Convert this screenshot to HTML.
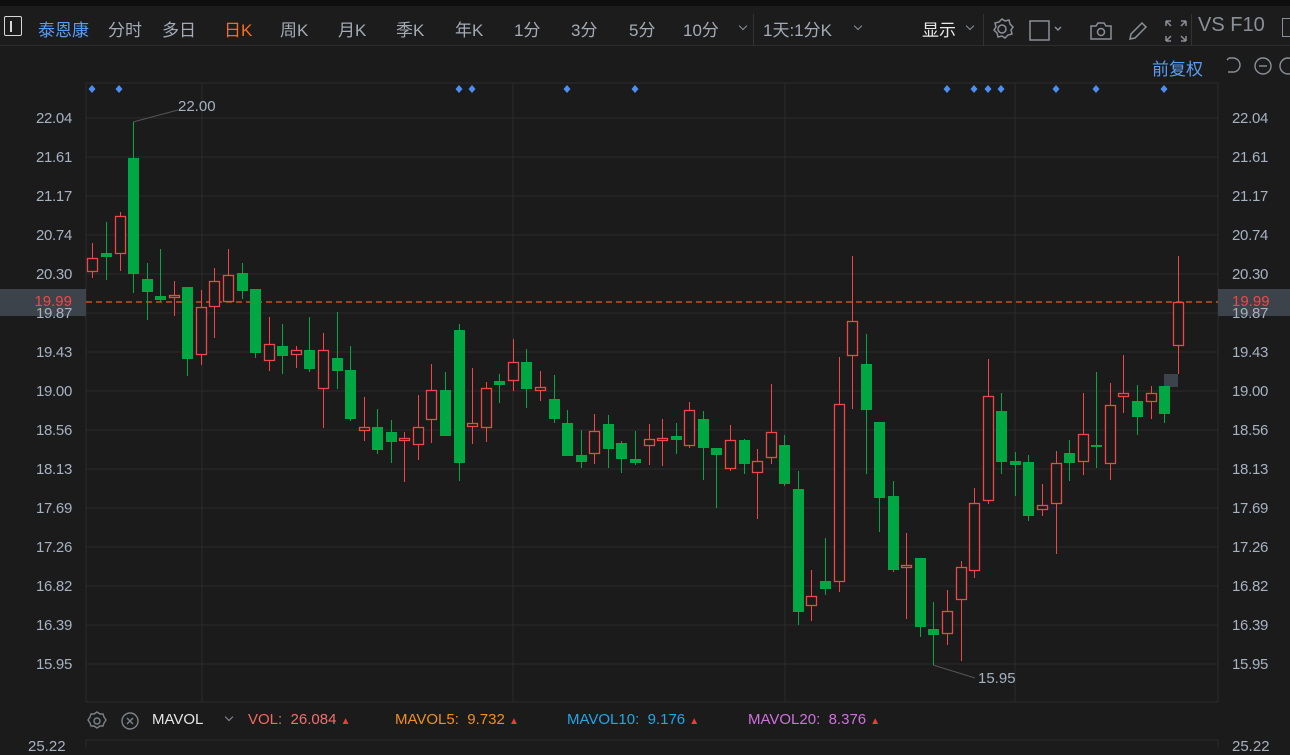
<!DOCTYPE html>
<html><head><meta charset="utf-8">
<style>
*{margin:0;padding:0;box-sizing:border-box}
body{width:1290px;height:747px;overflow:hidden;background:#1b1b1b;font-family:"Liberation Sans","Noto Sans CJK SC",sans-serif;position:relative}
.t{position:absolute;white-space:nowrap}
.top{position:absolute;left:0;top:0;width:1290px;height:6px;background:#0e0e0e}
.bar{position:absolute;left:0;top:6px;width:1290px;height:40px;background:#1c1c1c;border-bottom:1px solid #2c2c2c}
.bar .t{top:10px;font-size:17px;color:#a3abb6}
.div{position:absolute;top:8px;width:1px;height:32px;background:#333}
.chev{position:absolute;top:17px;width:6px;height:6px;border-right:1.3px solid #8a9098;border-bottom:1.3px solid #8a9098;transform:rotate(45deg)}
.ax{position:absolute;font-size:15px;color:#a6b2c2;width:60px;text-align:right;letter-spacing:-0.3px}
.axr{position:absolute;font-size:15px;color:#a6b2c2;left:1232px;letter-spacing:-0.3px}
.bot .t{top:711px;font-size:15px}
</style></head><body>
<div class="top"></div>
<div class="bar">
<div class="t" style="left:4px;top:10px;width:18px;height:20px;border:1.5px solid #d8d8d8;border-radius:2px"></div>
<div class="t" style="left:10px;top:15px;width:2px;height:11px;background:#d8d8d8"></div>
<div class="t" style="left:38px;color:#5b9cf2">泰恩康</div>
<div class="t" style="left:108px">分时</div>
<div class="t" style="left:162px">多日</div>
<div class="t" style="left:224px;color:#ff6a1a">日K</div>
<div class="t" style="left:280px">周K</div>
<div class="t" style="left:338px">月K</div>
<div class="t" style="left:396px">季K</div>
<div class="t" style="left:455px">年K</div>
<div class="t" style="left:514px">1分</div>
<div class="t" style="left:571px">3分</div>
<div class="t" style="left:629px">5分</div>
<div class="t" style="left:683px">10分</div>
<div class="chev" style="left:740px"></div>
<div class="div" style="left:753px"></div>
<div class="t" style="left:763px">1天:1分K</div>
<div class="chev" style="left:855px"></div>
<div class="t" style="left:922px;color:#e8e8e8">显示</div>
<div class="chev" style="left:967px"></div>
<div class="div" style="left:983px"></div>
<svg class="t" style="left:990px;top:8px" width="300" height="30" fill="none" stroke="#8a9098" stroke-width="1.5">
<circle cx="12" cy="15" r="4"/><path d="M12 5l3 2 4-1 1 4 3 3-2 3 1 4-4 1-3 3-3-2-4 1-1-4-3-3 2-3-1-4 4-1z"/>
<rect x="40" y="7" width="19" height="19"/><path d="M65 13l3 3 3-3" />
<path d="M101 12h5l2-3h6l2 3h5v13h-20z"/><circle cx="111" cy="18" r="3.5"/>
<path d="M140 25l1-5 11-11 4 4-11 11z"/>
<path d="M176 7v5M176 7h5M176 7l5 5M196 7v5M196 7h-5M196 7l-5 5M176 27v-5M176 27h5M176 27l5-5M196 27v-5M196 27h-5M196 27l-5-5"/>
</svg>
<div class="div" style="left:1191px"></div>
<div class="t" style="left:1198px;font-size:20px;top:8px;color:#8a9098">VS F10</div>
<div class="t" style="left:1282px;top:12px;width:12px;height:19px;border:1.5px solid #8a9098"></div>
</div>
<div class="t" style="left:1152px;top:55px;font-size:17px;color:#5b9cf2">前复权</div>
<svg class="t" style="left:1222px;top:54px" width="68" height="24" fill="none" stroke="#8a9098" stroke-width="1.4">
<path d="M7 4h4a7 7 0 0 1 0 14h-5M7 4l-2 2"/><circle cx="41" cy="12" r="8"/><path d="M37 12h8"/><circle cx="66" cy="12" r="8"/>
</svg>
<svg id="ch" class="t" style="left:0;top:0" width="1290" height="747"></svg>
<div class="t" style="left:0;top:289px;width:86px;height:27px;background:#3d434a"></div>
<div class="t" style="left:1218px;top:289px;width:72px;height:27px;background:#3d434a"></div>
<div id="axes"></div>
<div class="t" style="left:12px;top:293px;width:60px;text-align:right;font-size:15px;color:#f04848">19.99</div>
<div class="t" style="left:1232px;top:293px;font-size:15px;color:#f04848">19.99</div>
<div class="t" style="left:178px;top:98px;font-size:15px;color:#a6b2c2">22.00</div>
<div class="t" style="left:978px;top:670px;font-size:15px;color:#a6b2c2">15.95</div>
<div class="bot">
<svg class="t" style="left:86px;top:710px" width="60" height="22" fill="none" stroke="#7c828a" stroke-width="1.4">
<circle cx="11" cy="11" r="3"/><path d="M11 2l3 2 3 0 1 3 2 3-2 3-1 3-3 0-3 2-3-2-3 0-1-3-2-3 2-3 1-3 3 0z"/>
<circle cx="44" cy="11" r="8"/><path d="M41 8l6 6M47 8l-6 6"/></svg>
<div class="t" style="left:152px;color:#e6e6e6">MAVOL</div>
<div class="chev" style="left:226px;top:714px"></div>
<div class="t" style="left:248px;color:#f06a60">VOL:&nbsp; <span style="color:#f07070">26.084</span> <span style="color:#f03a3a;font-size:10px">▲</span></div>
<div class="t" style="left:395px;color:#f0901e">MAVOL5:&nbsp; 9.732 <span style="color:#f03a3a;font-size:10px">▲</span></div>
<div class="t" style="left:567px;color:#1ea8e8">MAVOL10:&nbsp; 9.176 <span style="color:#f03a3a;font-size:10px">▲</span></div>
<div class="t" style="left:748px;color:#d070e0">MAVOL20:&nbsp; 8.376 <span style="color:#f03a3a;font-size:10px">▲</span></div>
<div class="t" style="left:28px;top:738px;color:#a6b2c2">25.22</div>
<div class="t" style="left:1232px;top:738px;color:#a6b2c2">25.22</div>
</div>
<script>
var s='';
var G='#2b2b2b';
s+='<rect x="86" y="83" width="1132" height="619" fill="none" stroke="'+G+'"/>';
s+='<line x1="86" y1="740" x2="1218" y2="740" stroke="'+G+'"/>';
s+='<line x1="86" y1="740" x2="86" y2="747" stroke="'+G+'"/><line x1="1218" y1="740" x2="1218" y2="747" stroke="'+G+'"/>';
var labs=['22.04','21.61','21.17','20.74','20.30','19.87','19.43','19.00','18.56','18.13','17.69','17.26','16.82','16.39','15.95'];
var ax='';
for(var i=0;i<15;i++){var y=118+i*39;s+='<line x1="86" y1="'+y+'" x2="1218" y2="'+y+'" stroke="'+G+'"/>';
ax+='<div class="ax" style="left:12px;top:'+(y-8)+'px">'+labs[i]+'</div><div class="axr" style="top:'+(y-8)+'px">'+labs[i]+'</div>';}
document.getElementById('axes').innerHTML=ax;
[202,513,785,1015].forEach(function(x){s+='<line x1="'+x+'" y1="83" x2="'+x+'" y2="702" stroke="'+G+'"/>';});
s+='<line x1="86" y1="302" x2="1218" y2="302" stroke="#e0601a" stroke-width="1.3" stroke-dasharray="6,4"/>';
s+='<polyline points="133,122 178,110" stroke="#555" fill="none"/><polyline points="933,665 975,678" stroke="#555" fill="none"/>';
[92,119,459,472,567,635,947,974,988,1001,1056,1096,1164].forEach(function(x){s+='<path d="M'+x+' 85l3.5 4-3.5 4-3.5-4z" fill="#4d8ff0"/>';});
var c=[
[92,243,278,258,272,'r'],[106,222,280,253,257,'g'],[120,212,271,216,254,'r'],[133,122,293,158,274,'g'],[147,263,320,279,292,'g'],
[160,249,302,296,300,'g'],[174,281,316,295,298,'r'],[187,287,376,287,359,'g'],[201,290,365,307,355,'r'],[214,268,338,281,307,'r'],
[228,249,302,275,302,'r'],[242,263,299,273,291,'g'],[255,289,358,289,353,'g'],[269,317,371,344,361,'r'],[282,324,374,346,356,'g'],
[296,346,368,350,355,'r'],[309,317,372,350,369,'g'],[323,333,428,350,389,'r'],[337,312,389,358,371,'g'],[350,346,421,370,419,'g'],
[364,397,441,427,431,'r'],[377,409,454,427,450,'g'],[391,420,463,432,442,'g'],[404,432,482,438,441,'r'],[418,395,460,427,445,'r'],
[431,364,443,390,420,'r'],[445,372,436,390,436,'g'],[459,324,481,330,463,'g'],[472,368,444,423,427,'r'],[486,382,442,388,428,'r'],
[499,374,403,381,385,'g'],[513,339,391,362,381,'r'],[526,349,408,362,389,'g'],[540,371,401,387,391,'r'],[554,375,423,399,419,'g'],
[567,410,456,423,456,'g'],[581,430,468,455,462,'g'],[594,414,464,431,454,'r'],[608,415,468,424,449,'g'],[621,441,473,443,459,'g'],
[635,431,465,459,463,'g'],[649,424,465,439,446,'r'],[662,419,466,438,441,'r'],[676,423,454,436,440,'g'],[689,402,448,410,446,'r'],
[703,411,480,419,448,'g'],[716,448,508,448,455,'g'],[730,425,471,440,469,'r'],[744,439,474,440,464,'g'],[757,449,519,461,473,'r'],
[771,384,464,432,458,'r'],[784,435,486,445,484,'g'],[798,471,625,489,612,'g'],[811,570,621,596,606,'r'],[825,538,595,581,589,'g'],
[839,357,592,404,582,'r'],[852,256,409,321,356,'r'],[866,334,474,364,410,'g'],[879,422,532,422,498,'g'],[893,481,572,496,570,'g'],
[906,533,619,565,568,'r'],[920,558,637,558,627,'g'],[933,602,665,629,635,'g'],[947,590,645,611,634,'r'],[961,561,661,567,600,'r'],
[974,488,578,503,571,'r'],[988,359,504,396,501,'r'],[1001,393,474,411,462,'g'],[1015,452,496,461,465,'g'],[1028,455,521,462,516,'g'],
[1042,484,516,505,510,'r'],[1056,451,554,463,504,'r'],[1069,440,481,453,463,'g'],[1083,393,475,434,462,'r'],[1096,372,468,445,446,'g'],
[1110,383,480,405,464,'r'],[1123,355,413,393,397,'r'],[1137,385,435,401,417,'g'],[1151,386,419,393,402,'r'],[1164,386,423,386,414,'g'],
[1178,256,374,302,346,'r']];
s+='<rect x="1164" y="374" width="14" height="13" fill="#3d434a"/>';
c.forEach(function(k){var x=k[0]+0.5;
if(k[5]=='g'){s+='<line x1="'+x+'" y1="'+k[1]+'" x2="'+x+'" y2="'+k[2]+'" stroke="#00a843"/><rect x="'+(k[0]-5)+'" y="'+k[3]+'" width="11" height="'+Math.max(2,k[4]-k[3])+'" fill="#00a843"/>';}
else{s+='<line x1="'+x+'" y1="'+k[1]+'" x2="'+x+'" y2="'+k[3]+'" stroke="#f04646"/><line x1="'+x+'" y1="'+k[4]+'" x2="'+x+'" y2="'+k[2]+'" stroke="#f04646"/><rect x="'+(k[0]-4.5)+'" y="'+(k[3]+0.5)+'" width="10" height="'+Math.max(2,k[4]-k[3]-1)+'" fill="#1b1b1b" stroke="#f04646" stroke-width="1.3"/>';}
});
document.getElementById('ch').innerHTML=s;
</script>
</body></html>
